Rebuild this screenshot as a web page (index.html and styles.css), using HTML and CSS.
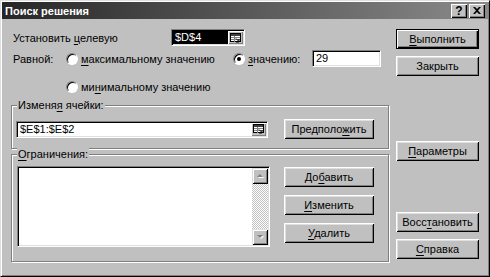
FILE: index.html
```html
<!DOCTYPE html>
<html lang="ru">

<head>
  <meta charset="UTF-8">
  <title>Поиск решения</title>
  <link rel="stylesheet" href="styles.css">
</head>

<body>
  <div class="window">
    <div class="titlebar">
      <span class="title">Поиск решения</span>
      <div class="tb-btns">
        <span class="tb-btn tb-help">?</span>
        <span class="tb-btn">
          <svg width="8" height="7" viewBox="0 0 8 7"><path d="M0 0h2l2 2 2-2h2L5 3.5 8 7H6L4 5 2 7H0l3-3.5z" fill="#000"/></svg>
        </span>
      </div>
    </div>

    <div class="content">
      <div class="main">
        <div class="row row-target">
          <span class="lbl-target">Установить <u>ц</u>елевую</span>
          <div class="field refedit">
            <span class="ref-value selected">$D$4</span>
            <span class="ref-btn">
              <svg width="11" height="10" viewBox="0 0 11 10">
                <rect x="0.5" y="0.5" width="10" height="8" fill="#fff" stroke="#000"/>
                <rect x="1" y="1" width="9" height="2" fill="#404040"/>
                <path d="M1 4.5h9M1 6.5h9M4.5 3v6" stroke="#808080"/>
                <path d="M6 5.5l3 3M9 6v3H6" stroke="#000" fill="none"/>
              </svg>
            </span>
          </div>
        </div>

        <div class="row row-equal">
          <span class="lbl-equal">Равной:</span>
          <label class="opt opt-max"><span class="radio"></span><span><u>м</u>аксимальному значению</span></label>
          <label class="opt opt-val"><span class="radio checked"></span><span><u>з</u>начению:</span></label>
          <div class="field value-field">29</div>
        </div>

        <div class="row row-min">
          <label class="opt"><span class="radio"></span><span>ми<u>н</u>имальному значению</span></label>
        </div>

        <div class="group group-vars">
          <span class="group-title">Изменя<u>я</u> ячейки:</span>
          <div class="group-row">
            <div class="field refedit refedit-wide">
              <span class="ref-value">$E$1:$E$2</span>
              <span class="ref-btn">
                <svg width="11" height="10" viewBox="0 0 11 10">
                  <rect x="0.5" y="0.5" width="10" height="8" fill="#fff" stroke="#000"/>
                  <rect x="1" y="1" width="9" height="2" fill="#404040"/>
                  <path d="M1 4.5h9M1 6.5h9M4.5 3v6" stroke="#808080"/>
                  <path d="M6 5.5l3 3M9 6v3H6" stroke="#000" fill="none"/>
                </svg>
              </span>
            </div>
            <button class="btn btn-group">Предполо<u>ж</u>ить</button>
          </div>
        </div>

        <div class="group group-cons">
          <span class="group-title"><u>О</u>граничения:</span>
          <div class="group-row group-row-top">
            <div class="listbox">
              <div class="scrollbar">
                <span class="sb-btn">
                  <svg width="7" height="5" viewBox="0 0 7 5"><path d="M1 4h6L4 1z" fill="#fff"/><path d="M0 3h6L3 0z" fill="#808080"/></svg>
                </span>
                <span class="sb-track"></span>
                <span class="sb-btn">
                  <svg width="7" height="5" viewBox="0 0 7 5"><path d="M1 1h6L4 4z" fill="#fff"/><path d="M0 0h6L3 3z" fill="#808080"/></svg>
                </span>
              </div>
            </div>
            <div class="group-btns">
              <button class="btn btn-group">До<u>б</u>авить</button>
              <button class="btn btn-group"><u>И</u>зменить</button>
              <button class="btn btn-group"><u>У</u>далить</button>
            </div>
          </div>
        </div>
      </div>

      <div class="side">
        <button class="btn btn-default"><u>В</u>ыполнить</button>
        <button class="btn btn-close">Закрыть</button>
        <button class="btn btn-params"><u>П</u>араметры</button>
        <button class="btn btn-reset">Восс<u>т</u>ановить</button>
        <button class="btn btn-help"><u>С</u>правка</button>
      </div>
    </div>
  </div>
</body>

</html>
```

FILE: styles.css
```css
* {
  box-sizing: border-box;
}

html,
body {
  margin: 0;
  padding: 0;
}

body {
  background: #c0c0c0;
  font-family: "Liberation Sans", Arial, sans-serif;
  font-size: 11px;
  color: #000;
}

u {
  text-decoration-thickness: 1px;
  text-underline-offset: 2px;
}

.window {
  width: 490px;
  height: 277px;
  padding: 1px;
  background: #c0c0c0;
  border: 1px solid;
  border-color: #dfdfdf #000 #000 #dfdfdf;
  box-shadow: inset 1px 1px #fff, inset -1px -1px #808080;
  display: flex;
  flex-direction: column;
}

/* title bar */
.titlebar {
  height: 17px;
  padding: 0 3px 0 3px;
  display: flex;
  align-items: center;
  justify-content: space-between;
  background: linear-gradient(to right, #262626, #8a8a8a);
}

.title {
  color: #fff;
  font-weight: bold;
  font-size: 11px;
}

.tb-btns {
  display: flex;
  gap: 2px;
}

.tb-btn {
  width: 16px;
  height: 14px;
  display: flex;
  align-items: center;
  justify-content: center;
  background: #c0c0c0;
  box-shadow: inset 1px 1px #fff, inset -1px -1px #000, inset -2px -2px #808080;
}

.tb-help {
  font-weight: bold;
  font-size: 12px;
}

/* body */
.content {
  flex: 1;
  display: flex;
  padding: 10px 9px 0 9px;
}

.main {
  width: 378px;
}

.side {
  width: 83px;
  margin-left: 7px;
  display: flex;
  flex-direction: column;
}

.row {
  display: flex;
  align-items: center;
  height: 17px;
}

.row-target {
  padding-left: 2px;
}

.lbl-target {
  width: 158px;
}

.row-equal {
  margin-top: 4px;
  padding-left: 2px;
}

.lbl-equal {
  width: 53px;
}

.row-min {
  margin-top: 11px;
  padding-left: 55px;
}

.opt {
  display: flex;
  align-items: center;
}

.opt-max {
  width: 167px;
}

.opt-val {
  width: 79px;
}

.radio {
  width: 12px;
  height: 12px;
  margin-right: 3px;
  border-radius: 50%;
  background: #fff;
  border: 1px solid;
  border-color: #808080 #fff #fff #808080;
  box-shadow: inset 1px 1px #000;
  display: flex;
  align-items: center;
  justify-content: center;
}

.radio.checked::after {
  content: "";
  width: 4px;
  height: 4px;
  border-radius: 50%;
  background: #000;
}

/* sunken fields */
.field {
  height: 17px;
  padding: 1px;
  background: #fff;
  border: 1px solid;
  border-color: #808080 #fff #fff #808080;
  box-shadow: inset 1px 1px #000, inset -1px -1px #dfdfdf;
}

.value-field {
  width: 69px;
  padding-left: 3px;
  line-height: 13px;
}

.refedit {
  width: 74px;
  display: flex;
}

.refedit-wide {
  width: 252px;
}

.ref-value {
  flex: 1;
  line-height: 13px;
  padding-left: 2px;
}

.ref-value.selected {
  background: #000;
  color: #fff;
}

.ref-btn {
  width: 15px;
  height: 13px;
  display: flex;
  align-items: center;
  justify-content: center;
  background: #c0c0c0;
  box-shadow: inset 1px 1px #fff, inset -1px -1px #808080;
}

/* group frames */
.group {
  border: 1px solid #808080;
  box-shadow: inset 1px 1px #fff, 1px 1px #fff;
  padding: 0 14px 9px 4px;
}

.group-vars {
  margin-top: 10px;
}

.group-cons {
  margin-top: 5px;
  padding-bottom: 14px;
}

.group-title {
  display: table;
  margin: -8px 0 0 1px;
  padding: 0 1px;
  line-height: 14px;
  background: #c0c0c0;
}

.group-row {
  margin-top: 7px;
  display: flex;
  align-items: center;
  justify-content: space-between;
}

.group-row-top {
  margin-top: 5px;
  align-items: flex-start;
}

.listbox {
  width: 253px;
  height: 81px;
  margin-left: 1px;
  padding: 1px;
  background: #fff;
  border: 1px solid;
  border-color: #808080 #fff #fff #808080;
  box-shadow: inset 1px 1px #000, inset -1px -1px #dfdfdf;
  display: flex;
  justify-content: flex-end;
}

.scrollbar {
  width: 16px;
  display: flex;
  flex-direction: column;
}

.sb-btn {
  height: 16px;
  display: flex;
  align-items: center;
  justify-content: center;
  background: #c0c0c0;
  box-shadow: inset 1px 1px #dfdfdf, inset -1px -1px #000, inset 2px 2px #fff, inset -2px -2px #808080;
}

.sb-track {
  flex: 1;
  background: repeating-conic-gradient(#fff 0 25%, #c0c0c0 0 50%) 0 0 / 2px 2px;
}

.group-btns {
  margin-top: 1px;
  display: flex;
  flex-direction: column;
  gap: 8px;
}

/* buttons */
.btn {
  height: 20px;
  padding: 0;
  border: none;
  background: #c0c0c0;
  font: inherit;
  color: #000;
  text-align: center;
  box-shadow: inset 1px 1px #fff, inset -1px -1px #000, inset 2px 2px #dfdfdf, inset -2px -2px #808080;
}

.btn-group {
  width: 90px;
}

.side .btn {
  width: 83px;
}

.btn-default {
  border: 1px solid #000;
  box-shadow: inset 1px 1px #fff, inset -1px -1px #000, inset -2px -2px #808080;
}

.btn-close {
  margin-top: 7px;
}

.btn-params {
  margin-top: 65px;
}

.btn-reset {
  margin-top: 51px;
}

.btn-help {
  margin-top: 7px;
}
```
